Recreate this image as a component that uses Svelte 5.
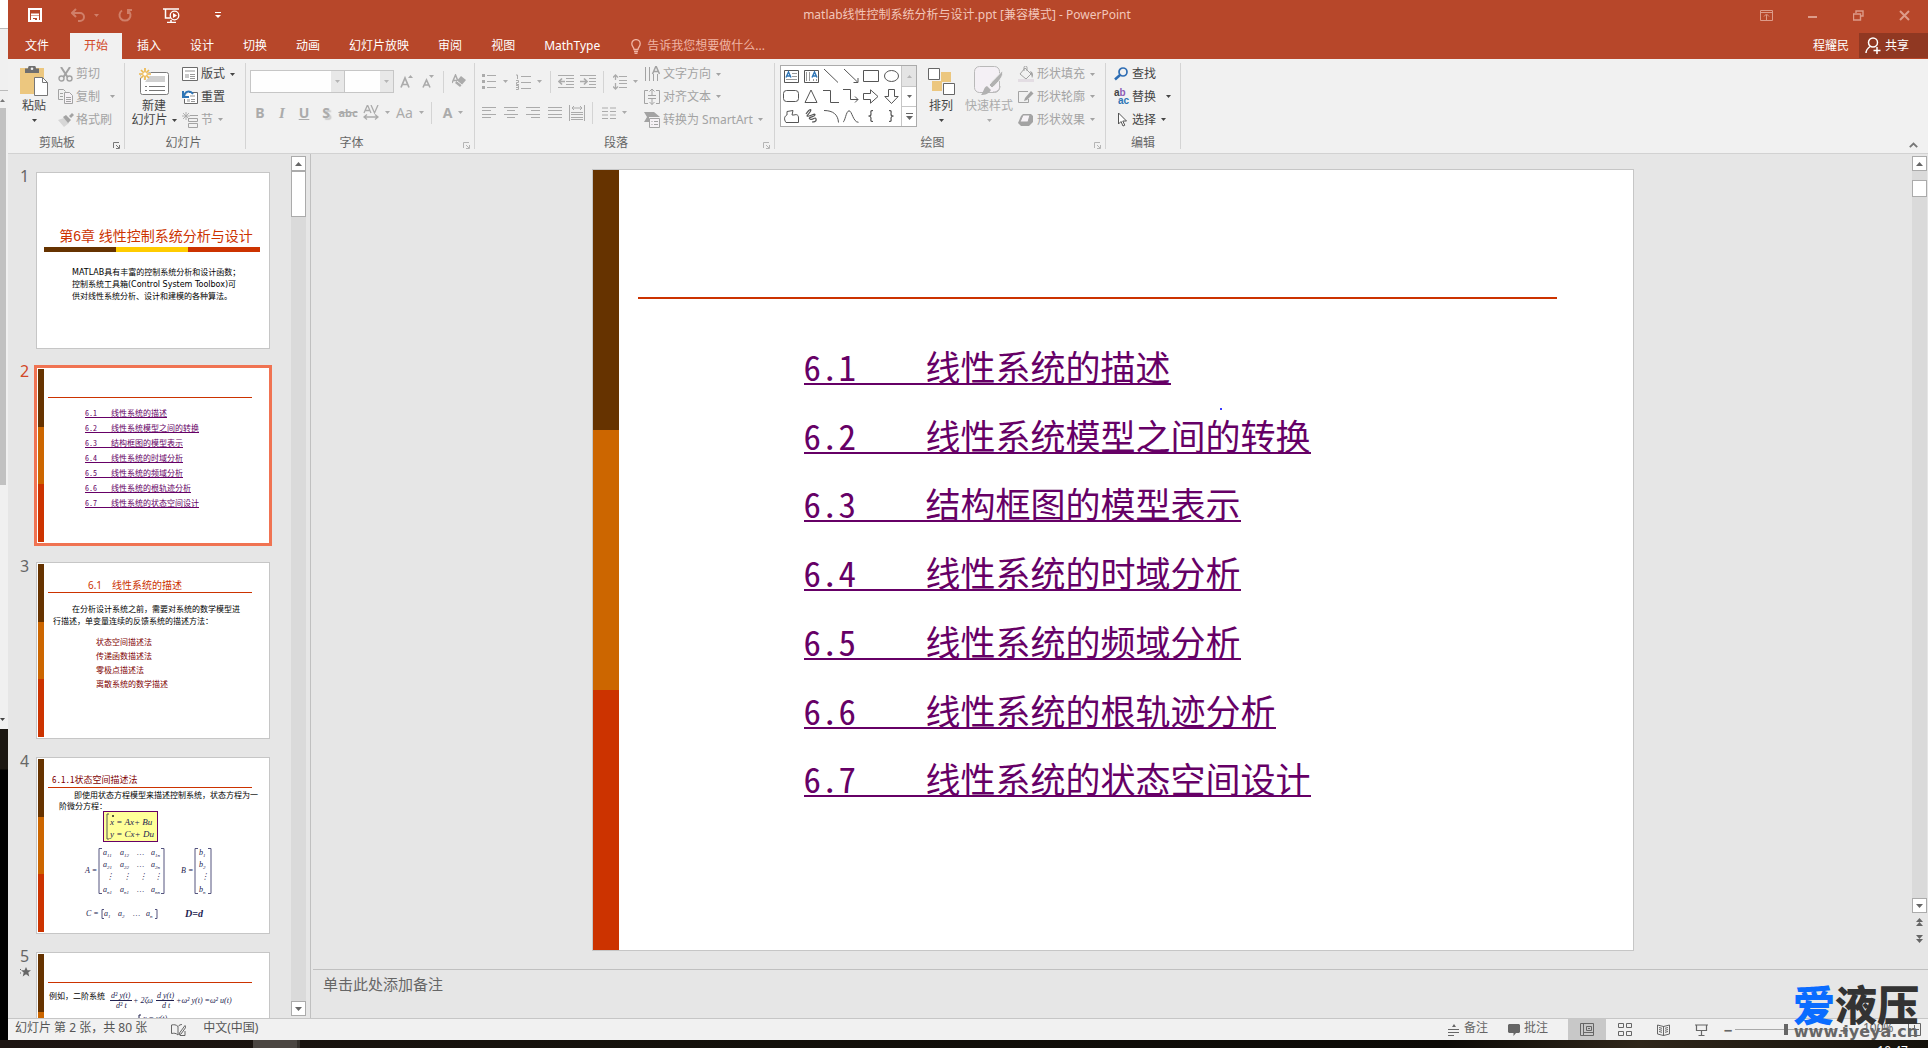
<script>
  const icons = {
    save: [14, 14, '<path d="M1 1h12v12H1z" fill="none" stroke="currentColor" stroke-width="2"/><path d="M3 6.500h8M4 13V9h6v4" fill="none" stroke="currentColor" stroke-width="2"/><path d="M5 11h2v3H5z" fill="currentColor"/>'],
    undo: [15, 14, '<path d="M5 1L1 5l4 4M1 5h8a4 4 0 0 1 0 8H7" fill="none" stroke="currentColor" stroke-width="2"/>'],
    redo: [14, 14, '<path d="M4 2.500a5.500 5.500 0 1 0 6 0M10 6V2h4" fill="none" stroke="currentColor" stroke-width="2"/>'],
    present: [17, 15, '<path d="M0 1h16M2.500 1v9h5M4 14.500h9M8 12v2" fill="none" stroke="currentColor" stroke-width="1.500"/><circle cx="11.500" cy="7.500" r="4.300" fill="#b7472a" stroke="currentColor" stroke-width="1.300"/><path d="M10 5v5l4-2.500z" fill="currentColor"/>'],
    customize: [6, 7, '<path d="M0 .5h6" stroke="currentColor"/><path d="M0 3h6L3 6z" fill="currentColor"/>'],
    ribbonOpts: [13, 11, '<path d="M.5.500h12v10H.5zM.5 2.500h12M6.500 10V5M4 6.500l2.500-2.500L9 6.500" fill="none" stroke="currentColor"/>'],
    minimize: [10, 11, '<path d="M0 7h9" stroke="currentColor" stroke-width="2"/>'],
    restore: [11, 11, '<path d="M.5 4h7v6h-7zM3 3V1h7v5H8" fill="none" stroke="currentColor" stroke-width="1.400"/>'],
    close: [11, 11, '<path d="M1 1l9 9M10 1l-9 9" stroke="currentColor" stroke-width="2"/>'],
    bulb: [10, 15, '<path d="M3 10.500C3 8 .8 7.500.8 4.800a4.200 4.200 0 0 1 8.400 0C9.200 7.500 7 8 7 10.500zM3 12.500h4M3.500 14.300h3" fill="none" stroke="currentColor" stroke-width="1.300"/>'],
    share: [16, 17, '<circle cx="8" cy="5.500" r="4.500" fill="none" stroke="currentColor" stroke-width="1.500"/><path d="M1 16c0-3 2-5 4-6.500M12 10v7M8.500 13.500h7" fill="none" stroke="currentColor" stroke-width="1.500"/>'],
    caret: [5, 3, '<path d="M0 0h5L2.500 3z" fill="currentColor"/>'],
    paste: [28, 30, '<path d="M0 2h24v26H0z" fill="#ecc77f"/><path d="M5 2.500h3a4 3.500 0 0 1 8 0h3V7H5z" fill="#6f6f6f"/><circle cx="12" cy="2.800" r="1.300" fill="#f1f1f1"/><path d="M14.500 11.500h8l5 5v13h-13z" fill="#fff" stroke="#777"/><path d="M22.500 11.500v5h5" fill="none" stroke="#777"/>'],
    cut: [15, 15, '<path d="M3 0l6.500 10M12 0L5.500 10" stroke="currentColor" stroke-width="2" fill="none"/><circle cx="3.500" cy="11.500" r="2.500" fill="none" stroke="currentColor" stroke-width="1.400"/><circle cx="11.500" cy="11.500" r="2.500" fill="none" stroke="currentColor" stroke-width="1.400"/>'],
    copy: [15, 15, '<path d="M5 10.500H.5V.5h5l2 2M2 4.500h3M2 7.500h3" fill="none" stroke="currentColor"/><path d="M6.500 3.500h5l3 3v8h-8z" fill="#f6f2f6" stroke="currentColor"/><path d="M8 8.500h5M8 10.500h5M8 12.500h5" stroke="currentColor"/>'],
    brush: [16, 14, '<path d="M0 7l6-2 5 5-5 4C4 12 2 9 0 7z" fill="#d6d6d6"/><path d="M5 4l3-2 5 5-3 3zM11 3l3-3 2 2-3 3z" fill="currentColor"/>'],
    newSlide: [30, 27, '<path d="M3.500 4.500h24a2 2 0 0 1 2 2v18a2 2 0 0 1-2 2h-24a2 2 0 0 1-2-2v-18a2 2 0 0 1 2-2z" fill="#fff" stroke="#7b7b7b"/><path d="M10 8h16v6H6z" fill="#d0d0d0"/><path d="M6 18.500h2m2 0h16M6 22.500h2m2 0h16" stroke="#777"/><path d="M5.500 0v12M0 6h12M1.500 2l8 8M9.500 2l-8 8" stroke="#f1f1f1" stroke-width="3"/><path d="M6 0v12M0 6h12M2 2l8 8M10 2l-8 8" stroke="#edb84f" stroke-width="1.700"/><circle cx="6" cy="6" r="1.800" fill="#fff"/>'],
    layout: [16, 14, '<path d="M.5.500h15v13H.5z" fill="#fff" stroke="#6b6b6b"/><path d="M3 3h10v2H3zM3 7h4v4H3z" fill="#c9c9c9"/><path d="M8 7.500h5M8 9.500h5M8 11.500h5" stroke="#999"/>'],
    reset: [16, 14, '<path d="M7 2.500h8.500v11H2.500V9" fill="#fff" stroke="#6b6b6b"/><path d="M8 5h5v2H8zM5 9h3v3H5z" fill="#c9c9c9"/><path d="M9 9.500h4M9 11.500h4" stroke="#999"/><path d="M2 6c1-5 6-6 9-2M1 1v6h6" fill="none" stroke="#2e75b6" stroke-width="2"/>'],
    section: [16, 16, '<path d="M4 0v8M0 4h8M1 1l6 6M7 1L1 7" stroke="currentColor" stroke-width=".8"/><path d="M8 3.500h8M6.500 6.500h9v3h-9zM6.500 11.500h9v4h-9z" fill="none" stroke="currentColor"/>'],
    growA: [13, 13, '<path d="M1 12.500L5 3l4 9.500M2.500 9.500h5" fill="none" stroke="currentColor" stroke-width="1.700"/><path d="M8 3h5l-2.500-3z" fill="currentColor"/>'],
    shrinkA: [12, 13, '<path d="M1 12.500L4.500 5 8 12.500M2 10h5" fill="none" stroke="currentColor" stroke-width="1.600"/><path d="M7 0h5L9.500 3z" fill="currentColor"/>'],
    eraser: [15, 15, '<path d="M0 9L3.500 1 6 7M1.500 6.500h4" fill="none" stroke="currentColor" stroke-width="1.500"/><path d="M9 2l5 4-6 7-5-4z" fill="currentColor"/><path d="M5 7l5 4" stroke="#f1f1f1"/>'],
    spacing: [16, 15, '<path d="M1 8L4.500 0 8 8M2.500 5.500h4M8 0l3.500 8L15 0M1 12h14M4 9.500L1 12l3 2.500M12 9.500l3 2.500-3 2.500" fill="none" stroke="currentColor" stroke-width="1.300"/>'],
    bullets: [15, 15, '<path d="M5 1.500h9M5 7.500h9M5 13.500h9" stroke="currentColor"/><path d="M0 0h3v3H0zM0 6h3v3H0zM0 12h3v3H0z" fill="currentColor"/>'],
    numbers: [15, 16, '<path d="M5 2.500h10M5 8.500h10M5 14.500h10" stroke="currentColor"/><path d="M0 1h1.500v4M0 6.500h2.500v2H.5v2H3M0 11.500h2.500v4H0M0 13.500h2.500" fill="none" stroke="currentColor"/>'],
    outdent: [16, 13, '<path d="M0 .5h16M8 3.500h8M8 6.500h8M8 9.500h8M0 12.500h16" stroke="currentColor"/><path d="M7 6.500H1M4 3.500l-3 3 3 3" fill="none" stroke="currentColor" stroke-width="1.700"/>'],
    indent: [16, 13, '<path d="M0 .5h16M9 3.500h7M9 6.500h7M9 9.500h7M0 12.500h16" stroke="currentColor"/><path d="M0 6.500h6M4 3.500l3 3-3 3" fill="none" stroke="currentColor" stroke-width="1.700"/>'],
    lineGap: [14, 16, '<path d="M6 2.500h8M6 6.500h8M6 9.500h8M6 13.500h8" stroke="currentColor"/><path d="M2.500 1v5M0 3.500L2.500 1 5 3.500M2.500 9v6M0 12.500L2.500 15 5 12.500" fill="none" stroke="currentColor" stroke-width="1.300"/>'],
    left: [14, 11, '<path d="M0 .5h14M0 3.500h9M0 7.500h14M0 10.500h9" stroke="currentColor"/>'],
    center: [14, 11, '<path d="M0 .5h14M3 3.500h8M0 7.500h14M3 10.500h8" stroke="currentColor"/>'],
    right: [14, 11, '<path d="M0 .5h14M5 3.500h9M0 7.500h14M5 10.500h9" stroke="currentColor"/>'],
    justify: [14, 11, '<path d="M0 .5h14M0 3.500h14M0 7.500h14M0 10.500h14" stroke="currentColor"/>'],
    distribute: [16, 16, '<path d="M.5 0v16M15.500 0v16M2 7.500h12M2 9.500h12M2 12.500h12M2 14.500h12M3 3h10M5 1L3 3l2 2M11 1l2 2-2 2" fill="none" stroke="currentColor"/>'],
    columns: [14, 12, '<path d="M0 1h6M0 4.500h6M0 8h6M0 11.500h6M8 1h6M8 4.500h6M8 8h6M8 11.500h6" stroke="currentColor" stroke-width="1.200"/>'],
    textDir: [16, 16, '<path d="M1.500 1v14M5.500 1v14M9.500 8v7M13.500 8v7" stroke="currentColor"/><path d="M8.500 8L12 0l3.500 8M10 5.500h4" fill="none" stroke="currentColor" stroke-width="1.500"/>'],
    alignText: [16, 16, '<path d="M4 1.500H.5v13H4M12 1.500h3.500v13H12" fill="none" stroke="currentColor"/><path d="M4 6.500h8M4 9.500h8M8 0v6M5.500 2.500L8 0l2.500 2.500M8 10v5.500M5.500 13L8 15.500 10.500 13" fill="none" stroke="currentColor"/>'],
    smart: [16, 16, '<path d="M0 0h10l6 5H5v5H0l3-5z" fill="currentColor"/><path d="M5.500 6.500h10v9h-10z" fill="#f6f2f6" stroke="currentColor"/><path d="M7.500 9.500h1m1.500 0h4M7.500 12.500h1m1.500 0h4" stroke="currentColor"/>'],
    sTextH: [15, 13, '<path d="M.5.500h14v12H.5z" fill="#fff" stroke="#555"/><path d="M2 7.500L4.500 2 7 7.500M3 6h3" fill="none" stroke="#2e75b6" stroke-width="1.400"/><path d="M8 3.500h5M8 6.500h5M2 9.500h11" stroke="#999"/>'],
    sTextV: [15, 13, '<path d="M.5.500h14v12H.5z" fill="#fff" stroke="#555"/><path d="M8 7.500L10.500 2 13 7.500M9 6h3" fill="none" stroke="#2e75b6" stroke-width="1.400"/><path d="M2.500 2v9M5.500 2v9M9.500 9v2M12.500 9v2" stroke="#999"/>'],
    sLine: [14, 14, '<path d="M0 0l14 13.500" stroke="#555"/>'],
    sArrow: [15, 14, '<path d="M0 0l13.500 13M14 9v4.500H9.500" fill="none" stroke="#555"/>'],
    sRect: [16, 12, '<path d="M.5.500h15v11H.5z" fill="none" stroke="#555"/>'],
    sOval: [15, 12, '<ellipse cx="7.500" cy="6" rx="7" ry="5.500" fill="none" stroke="#555"/>'],
    sRound: [16, 12, '<rect x=".5" y=".5" width="15" height="11" rx="3" fill="none" stroke="#555"/>'],
    sTri: [14, 14, '<path d="M7 1l6 12.500H1z" fill="none" stroke="#555"/>'],
    sElbow: [16, 13, '<path d="M0 .5h7.500v12H16" fill="none" stroke="#555"/>'],
    sElbowA: [16, 14, '<path d="M0 .5h7.500v10H15M12 7.500l3 3-3 3" fill="none" stroke="#555"/>'],
    sRight: [16, 15, '<path d="M.5 4.500h7V.8L15 7.500l-7.500 6.700v-3.700h-7z" fill="none" stroke="#555"/>'],
    sDown: [15, 15, '<path d="M4.500.500h6v7h3.700l-6.700 7L.8 7.500h3.700z" fill="none" stroke="#555"/>'],
    sFree: [15, 13, '<path d="M3 1.500L9 .5 8 5h2c3-1 4.500 0 4.500 3v4.500H2C-.5 9 .5 6 3 5z" fill="none" stroke="#555"/>'],
    sScrib: [12, 14, '<path d="M1 5c4-6 6-5 4-2s-5 5-1 4 6-3 6-1-8 2-5 4 5-3 6 0-3 3-4 3" fill="none" stroke="#555" stroke-width="1.200"/>'],
    sArc: [15, 13, '<path d="M0 .5c9 0 14 4 14.500 12" fill="none" stroke="#555"/>'],
    sCurve: [16, 13, '<path d="M0 12C2 12 3 1 6 .8s4 11.500 9.500 11.500" fill="none" stroke="#555"/>'],
    sBraceL: [6, 12, '<path d="M5 .5C2 .5 3 2 3 4S2 6 1 6s2 0 2 2-1 3.500 2 3.500" fill="none" stroke="#555" stroke-width="1.200"/>'],
    sBraceR: [6, 12, '<path d="M1 .5C4 .5 3 2 3 4s1 2 2 2-2 0-2 2 1 3.500-2 3.500" fill="none" stroke="#555" stroke-width="1.200"/>'],
    up: [5, 3, '<path d="M0 3h5L2.500 0z" fill="currentColor"/>'],
    more: [7, 7, '<path d="M0 .5h7" stroke="currentColor"/><path d="M0 3h7L3.500 7z" fill="currentColor"/>'],
    arrange: [27, 27, '<path d="M13 4h10v10H13zM4 13h10v10H4z" fill="#ecc77f"/><path d="M.5.500h11v11H.5zM15.500 15.500h11v11h-11z" fill="#fff" stroke="#666"/>'],
    quick: [30, 30, '<rect x=".5" y=".5" width="25" height="26" rx="5" fill="#f4f0f5" stroke="#b9b9b9"/><path d="M28 5c3 4-4 12-10 17l-3-3C19 14 25 9 28 5z" fill="#b1b1b1" stroke="#f1f1f1"/><path d="M13 20l4 4c-2 4-6 5-10 5 3-3 2-7 6-9z" fill="#b1b1b1"/><path d="M19 26c4 0 7-2 7-6" stroke="#b9b9b9" fill="none"/>'],
    fill: [16, 16, '<path d="M7 2l6 6-5 5-6-5zM6 5V1.500a1.500 1.500 0 0 1 3 0V5" fill="none" stroke="currentColor"/><path d="M12 5c3 1 4 4 2 7l-1-4z" fill="currentColor"/><path d="M0 13h16v3H0z" fill="#e3dde3"/>'],
    outline: [16, 14, '<path d="M10 1.500H.5v11h10V9" fill="none" stroke="currentColor"/><path d="M13 1l2.500 2.500L9 10l-3 1 1-3z" fill="currentColor"/>'],
    effect: [16, 14, '<path d="M5 1h8l2 2v6l-4 4H3L0 10l3-7z" fill="currentColor"/><path d="M5 2h7l-2 7H2z" fill="#f6f2f6" stroke="currentColor"/>'],
    find: [15, 14, '<circle cx="9" cy="5" r="4" fill="none" stroke="#2e6db4" stroke-width="1.700"/><path d="M6 8l-5 4.500" stroke="#2e6db4" stroke-width="2.500"/>'],
    select: [15, 15, '<path d="M4.500 1v11l2.500-2.500 2 4.500 1.800-.8-2-4.200h3.700z" fill="#fff" stroke="#555"/>'],
    launcher: [7, 7, '<path d="M.5 6V.5H6M3 3l3 3M6.500 3v3.500H3" fill="none" stroke="currentColor"/>'],
    chevron: [9, 6, '<path d="M.8 5.200L4.500 1.500 8.200 5.200" fill="none" stroke="currentColor" stroke-width="1.800"/>'],
    scrollUp: [7, 4, '<path d="M0 4h7L3.500 0z" fill="currentColor"/>'],
    scrollDown: [7, 4, '<path d="M0 0h7L3.500 4z" fill="currentColor"/>'],
    pageUp: [7, 8, '<path d="M0 4h7L3.500 0zM0 8h7L3.500 4z" fill="currentColor"/>'],
    pageDown: [7, 8, '<path d="M0 0h7L3.500 4zM0 4h7L3.500 8z" fill="currentColor"/>'],
    star: [11, 10, '<path d="M6 0l1.500 3.200H11L8.300 5.600 9.300 9.500 6 7.300 2.700 9.500l1-3.900L1 3.200h3.500z" fill="currentColor"/><path d="M0 2.500h1M0 6h1" stroke="currentColor"/>'],
    spell: [15, 12, '<path d="M7 11C5 9 3 9 .5 9.500V1C3 .5 5 .5 7 2.500zM7 2.500C8 1 10 .5 11 .5" fill="none" stroke="currentColor"/><path d="M14 1.500L8.500 9 8 11l2-1L15 3zM9 11.500h5V7" fill="none" stroke="currentColor"/>'],
    notes: [12, 12, '<path d="M4 3h4L6 0z" fill="currentColor"/><path d="M0 5.500h11M0 8.500h11M0 11.500h6" stroke="currentColor"/>'],
    comment: [12, 12, '<path d="M1 0h10l1 1v7l-1 1H8l-2.500 3V9H1L0 8V1z" fill="currentColor"/>'],
    normal: [14, 13, '<path d="M.5.500h13v12H.5zM3.500 1v11M6.500 3.500h5v4h-5zM4 9.500h9M8 5.500h2" fill="none" stroke="currentColor"/>'],
    sorter: [14, 13, '<path d="M.5.500h5v4h-5zM8.500.500h5v4h-5zM.5 8.500h5v4h-5zM8.500 8.500h5v4h-5z" fill="none" stroke="currentColor"/>'],
    reading: [13, 12, '<path d="M.5 1l6 1.500 6-1.500v9l-6 1.500-6-1.500zM6.500 2v10M2 3.500l3 .8M2 5.500l3 .8M2 7.500l3 .8M11 3.500l-3 .8M11 5.500l-3 .8M11 7.500l-3 .8" fill="none" stroke="currentColor"/>'],
    show: [13, 12, '<path d="M0 1h13M1.500 1v5.500h10V1M6.500 7v4M3.500 11.500h6" fill="none" stroke="currentColor" stroke-width="1.200"/>'],
    fit: [13, 13, '<path d="M.5.500h12v12H.5zM6.500 2v3M6.500 8v3M2 6.500h3M8 6.500h3" fill="none" stroke="currentColor"/>']
  };

  const tabs = ['文件', '开始', '插入', '设计', '切换', '动画', '幻灯片放映', '审阅', '视图', 'MathType'];
  const shapes = [
    ['sTextH', '横排文本框'], ['sTextV', '竖排文本框'], ['sLine', '直线'], ['sArrow', '箭头'], ['sRect', '矩形'], ['sOval', '椭圆'],
    ['sRound', '圆角矩形'], ['sTri', '三角形'], ['sElbow', '肘形连接符'], ['sElbowA', '肘形箭头'], ['sRight', '右箭头'], ['sDown', '下箭头'],
    ['sFree', '任意多边形'], ['sScrib', '自由曲线'], ['sArc', '弧形'], ['sCurve', '曲线'], ['sBraceL', '左大括号'], ['sBraceR', '右大括号']
  ];
  const chapters = [
    ['6.1', '线性系统的描述'],
    ['6.2', '线性系统模型之间的转换'],
    ['6.3', '结构框图的模型表示'],
    ['6.4', '线性系统的时域分析'],
    ['6.5', '线性系统的频域分析'],
    ['6.6', '线性系统的根轨迹分析'],
    ['6.7', '线性系统的状态空间设计']
  ];
  const matrixRows = [
    [44, '11', '12', '1n'],
    [56, '21', '22', '2n'],
    [81, 'n1', 'n1', 'nn']
  ];
  const views = [['normal', '普通视图'], ['sorter', '幻灯片浏览'], ['reading', '阅读视图'], ['show', '幻灯片放映']];
  let zoom = $state(50);
</script>

{#snippet icon(name)}
  <svg width={icons[name][0]} height={icons[name][1]} viewBox="0 0 {icons[name][0]} {icons[name][1]}" aria-hidden="true">{@html icons[name][2]}</svg>
{/snippet}

{#snippet cmd(name, text, off, drop)}
  <button class="cmd" class:off>
    <span class="cmd-icon">{@render icon(name)}</span>
    <span>{text}</span>
    {#if drop}<span class="drop">{@render icon('caret')}</span>{/if}
  </button>
{/snippet}

{#snippet tool(name, label, drop)}
  <button class="tool off" class:wide={drop} aria-label={label}>
    {@render icon(name)}
    {#if drop}{@render icon('caret')}{/if}
  </button>
{/snippet}

{#snippet caption(text, off, launcher)}
  <div class="caption">
    <span>{text}</span>
    {#if launcher}<button class="launcher" class:off aria-label="{text}设置">{@render icon('launcher')}</button>{/if}
  </div>
{/snippet}

{#snippet stripe()}
  <div class="stripe"><i></i><i></i><i></i></div>
{/snippet}

<div class="screen">
  <div class="behind">
    <div class="b-top"></div>
    <div class="b-pane"></div>
    <div class="b-mid">{@render icon('up')}</div>
    <div class="b-bar"></div>
    <div class="b-low">{@render icon('caret')}</div>
    <div class="b-dark"></div>
  </div>

  <div class="app">
    <header>
      <div class="titlebar">
        <div class="quick">
          <button class="q-save" aria-label="保存">{@render icon('save')}</button>
          <button class="q-undo dim" aria-label="撤消">{@render icon('undo')}{@render icon('caret')}</button>
          <button class="q-redo dim" aria-label="重复">{@render icon('redo')}</button>
          <button class="q-show" aria-label="从头开始放映">{@render icon('present')}</button>
          <button aria-label="自定义快速访问工具栏">{@render icon('customize')}</button>
        </div>
        <div class="title">matlab线性控制系统分析与设计.ppt [兼容模式] - PowerPoint</div>
        <div class="window">
          <button aria-label="功能区显示选项">{@render icon('ribbonOpts')}</button>
          <button aria-label="最小化">{@render icon('minimize')}</button>
          <button aria-label="还原">{@render icon('restore')}</button>
          <button aria-label="关闭">{@render icon('close')}</button>
        </div>
      </div>
      <nav class="tabs">
        {#each tabs as tab, i}
          <button class="tab" class:file={i === 0} class:active={i === 1}>{tab}</button>
        {/each}
        <button class="tell">{@render icon('bulb')}<span>告诉我您想要做什么...</span></button>
        <span class="user">程耀民</span>
        <button class="share">{@render icon('share')}<span>共享</span></button>
      </nav>
    </header>

    <section class="ribbon">
      <div class="group clip">
        <div class="body">
          <button class="big w48"><span class="big-icon">{@render icon('paste')}</span><span>粘贴</span><span>{@render icon('caret')}</span></button>
          <div class="stack">
            {@render cmd('cut', '剪切', true, false)}
            {@render cmd('copy', '复制', true, true)}
            {@render cmd('brush', '格式刷', true, false)}
          </div>
        </div>
        {@render caption('剪贴板', false, true)}
      </div>

      <div class="group slides">
        <div class="body">
          <button class="big w48"><span class="big-icon">{@render icon('newSlide')}</span><span>新建</span><span class="line">幻灯片{@render icon('caret')}</span></button>
          <div class="stack">
            {@render cmd('layout', '版式', false, true)}
            {@render cmd('reset', '重置', false, false)}
            {@render cmd('section', '节', true, true)}
          </div>
        </div>
        {@render caption('幻灯片', false, false)}
      </div>

      <div class="group font">
        <div class="rows">
          <div class="row">
            <label class="combo c-face"><select aria-label="字体" disabled><option></option></select><span>{@render icon('caret')}</span></label>
            <label class="combo c-size"><select aria-label="字号" disabled><option></option></select><span>{@render icon('caret')}</span></label>
            {@render tool('growA', '增大字号', false)}
            {@render tool('shrinkA', '减小字号', false)}
            <i class="sep"></i>
            {@render tool('eraser', '清除格式', false)}
          </div>
          <div class="row">
            <button class="tool off"><b>B</b></button>
            <button class="tool off"><em>I</em></button>
            <button class="tool off"><u>U</u></button>
            <button class="tool off"><b class="shadow">S</b></button>
            <button class="tool off"><s>abc</s></button>
            {@render tool('spacing', '字符间距', true)}
            <button class="tool wide off"><span class="aa">Aa</span>{@render icon('caret')}</button>
            <i class="sep"></i>
            <button class="tool wide off"><b class="aa">A</b>{@render icon('caret')}</button>
          </div>
        </div>
        {@render caption('字体', true, true)}
      </div>

      <div class="group para">
        <div class="body">
          <div class="rows">
            <div class="row">
              {@render tool('bullets', '项目符号', true)}
              {@render tool('numbers', '编号', true)}
              <i class="sep"></i>
              {@render tool('outdent', '降低列表级别', false)}
              {@render tool('indent', '提高列表级别', false)}
              <i class="sep"></i>
              {@render tool('lineGap', '行距', true)}
            </div>
            <div class="row">
              {@render tool('left', '左对齐', false)}
              {@render tool('center', '居中', false)}
              {@render tool('right', '右对齐', false)}
              {@render tool('justify', '两端对齐', false)}
              {@render tool('distribute', '分散对齐', false)}
              <i class="sep"></i>
              {@render tool('columns', '分栏', true)}
            </div>
          </div>
          <div class="stack">
            {@render cmd('textDir', '文字方向', true, true)}
            {@render cmd('alignText', '对齐文本', true, true)}
            {@render cmd('smart', '转换为 SmartArt', true, true)}
          </div>
        </div>
        {@render caption('段落', true, true)}
      </div>

      <div class="group draw">
        <div class="body">
          <div class="gallery">
            <div class="shapes">
              {#each shapes as [name, label]}
                <button aria-label={label}>{@render icon(name)}</button>
              {/each}
            </div>
            <div class="spin">
              <button class="off" aria-label="上一行">{@render icon('up')}</button>
              <button aria-label="下一行">{@render icon('caret')}</button>
              <button aria-label="其他形状">{@render icon('more')}</button>
            </div>
          </div>
          <button class="big w48"><span class="big-icon">{@render icon('arrange')}</span><span>排列</span><span>{@render icon('caret')}</span></button>
          <button class="big w48 off"><span class="big-icon">{@render icon('quick')}</span><span>快速样式</span><span>{@render icon('caret')}</span></button>
          <div class="stack">
            {@render cmd('fill', '形状填充', true, true)}
            {@render cmd('outline', '形状轮廓', true, true)}
            {@render cmd('effect', '形状效果', true, true)}
          </div>
        </div>
        {@render caption('绘图', true, true)}
      </div>

      <div class="group edit">
        <div class="body">
          <div class="stack">
            {@render cmd('find', '查找', false, false)}
            <button class="cmd">
              <span class="cmd-icon swap"><span>a<em>b</em></span><span class="to">ac</span></span>
              <span>替换</span><span class="drop far">{@render icon('caret')}</span>
            </button>
            {@render cmd('select', '选择', false, true)}
          </div>
        </div>
        {@render caption('编辑', false, false)}
      </div>
      <button class="collapse" aria-label="折叠功能区">{@render icon('chevron')}</button>
    </section>

    <main>
      <aside class="panel">
        <ol class="thumbs">
          <li>
            <span class="num">1</span>
            <div class="thumb cover">
              <h3>第6章 线性控制系统分析与设计</h3>
              <div class="tri"><i></i><i></i><i></i></div>
              <p>MATLAB具有丰富的控制系统分析和设计函数；<br />控制系统工具箱(Control System Toolbox)可<br />供对线性系统分析、设计和建模的各种算法。</p>
            </div>
          </li>
          <li class="current">
            <span class="num">2</span>
            <div class="thumb">
              {@render stripe()}
              <div class="page">
                <div class="head"></div>
                <ul class="mini">
                  {#each chapters as [no, name]}
                    <li><span><b>{no}</b>{name}</span></li>
                  {/each}
                </ul>
              </div>
            </div>
          </li>
          <li>
            <span class="num">3</span>
            <div class="thumb">
              {@render stripe()}
              <div class="page">
                <div class="head mid">6.1　线性系统的描述</div>
                <p class="intro">在分析设计系统之前，需要对系统的数学模型进<br />行描述，单变量连续的反馈系统的描述方法：</p>
                <ul class="methods">
                  <li>状态空间描述法</li>
                  <li>传递函数描述法</li>
                  <li>零极点描述法</li>
                  <li>离散系统的数学描述</li>
                </ul>
              </div>
            </div>
          </li>
          <li>
            <span class="num">4</span>
            <div class="thumb">
              {@render stripe()}
              <div class="page">
                <div class="head sub">6.1.1状态空间描述法</div>
                <p class="state">即使用状态方程模型来描述控制系统，状态方程为一<br />阶微分方程：</p>
                <svg class="math" width="200" height="116" viewBox="0 0 200 116">
                  <rect x="59.500" y=".5" width="54" height="30" fill="#ffff99" stroke="#660066" />
                  <path d="M65 3h-2v25h2" fill="none" stroke="#555" />
                  <circle cx="69" cy="5" r="1" fill="#222" />
                  <g font-size="9"><text x="66" y="14">x = Ax+ Bu</text><text x="66" y="26">y = Cx+ Du</text></g>
                  <g font-size="8">
                    <text x="41" y="62">A =</text>
                    <text x="137" y="62">B =</text>
                    <text x="42" y="105">C =</text>
                    {#each matrixRows as [y, a, b, c]}
                      <text x="59" {y}>a<tspan font-size="5" dy="2">{a}</tspan></text>
                      <text x="76" {y}>a<tspan font-size="5" dy="2">{b}</tspan></text>
                      <text x="93" {y}>…</text>
                      <text x="107" {y}>a<tspan font-size="5" dy="2">{c}</tspan></text>
                    {/each}
                    <g><text x="62" y="68">⋮</text><text x="79" y="68">⋮</text><text x="95" y="68">⋮</text><text x="110" y="68">⋮</text><text x="157" y="68">⋮</text></g>
                    <text x="155" y="44">b<tspan font-size="5" dy="2">1</tspan></text>
                    <text x="155" y="56">b<tspan font-size="5" dy="2">2</tspan></text>
                    <text x="155" y="81">b<tspan font-size="5" dy="2">n</tspan></text>
                    <text x="60" y="105">a<tspan font-size="5" dy="2">1</tspan></text>
                    <text x="74" y="105">a<tspan font-size="5" dy="2">2</tspan></text>
                    <text x="89" y="105">…</text>
                    <text x="102" y="105">a<tspan font-size="5" dy="2">n</tspan></text>
                  </g>
                  <text x="141" y="106" font-size="10" font-weight="bold">D=d</text>
                  <path d="M58 37.500h-3v45h3M117 37.500h3v45h-3M154 37.500h-3v45h3M164 37.500h3v45h-3M60 98.500h-2v9h2M111 98.500h2v9h-2" fill="none" stroke="#55557f" />
                </svg>
              </div>
            </div>
          </li>
          <li>
            <span class="num">5{@render icon('star')}</span>
            <div class="thumb">
              {@render stripe()}
              <div class="page">
                <div class="head"></div>
                <div class="example">
                  <span>例如，二阶系统</span>
                  <svg class="math" width="134" height="40" viewBox="0 0 134 40">
                    <g font-size="8">
                      <text x="2" y="10">d² y(t)</text><text x="7" y="20">d² t</text>
                      <text x="24" y="15">+ 2ζω</text>
                      <text x="48" y="10">d y(t)</text><text x="53" y="20">d t</text>
                      <text x="67" y="15">+ω² y(t) =ω² u(t)</text>
                      <text x="34" y="33">x = y(t)</text>
                    </g>
                    <path d="M1 12.500h22M47 12.500h18M32 27h-2v12" fill="none" stroke="#22224f" />
                  </svg>
                </div>
              </div>
            </div>
          </li>
        </ol>
        <div class="scroll">
          <button aria-label="向上滚动">{@render icon('scrollUp')}</button>
          <div class="knob long"></div>
          <button class="end" aria-label="向下滚动">{@render icon('scrollDown')}</button>
        </div>
      </aside>

      <section class="work">
        <div class="stage">
          <div class="canvas">
            <article class="slide">
              {@render stripe()}
              <div class="content">
                <div class="rule"></div>
                <ul>
                  {#each chapters as [no, name]}
                    <li><a href="#s{no}"><span class="no">{no}</span><span>{name}</span></a></li>
                  {/each}
                </ul>
              </div>
              <i class="dot"></i>
            </article>
          </div>
          <div class="scroll main-scroll">
            <button aria-label="上一屏">{@render icon('scrollUp')}</button>
            <div class="knob short"></div>
            <button class="end" aria-label="下一屏">{@render icon('scrollDown')}</button>
            <div class="pager">
              <button aria-label="上一张幻灯片">{@render icon('pageUp')}</button>
              <button aria-label="下一张幻灯片">{@render icon('pageDown')}</button>
            </div>
          </div>
        </div>
        <div class="memo">单击此处添加备注</div>
      </section>
    </main>

    <footer>
      <span>幻灯片 第 2 张，共 80 张</span>
      <button class="spell" aria-label="拼写检查">{@render icon('spell')}</button>
      <span>中文(中国)</span>
      <div class="tools">
        <button class="note">{@render icon('notes')}<span>备注</span></button>
        <button class="note">{@render icon('comment')}<span>批注</span></button>
        <div class="views">
          {#each views as [name, label], i}
            <button class:on={i === 0} aria-label={label}>{@render icon(name)}</button>
          {/each}
        </div>
        <button class="sign" aria-label="缩小">−</button>
        <input type="range" min="0" max="100" bind:value={zoom} aria-label="显示比例" />
        <button class="sign" aria-label="放大">+</button>
        <span class="pct">100%</span>
        <button aria-label="适应窗口">{@render icon('fit')}</button>
      </div>
    </footer>
  </div>

  <div class="taskbar"><i></i><span>10:47</span></div>
  <div class="mark"><div class="m-name"><b>爱</b>液压</div><div class="m-url">www.iyeya.cn</div></div>
</div>

<style>
  :global(body) { margin: 0; overflow: hidden; }
  .screen {
    position: relative;
    display: grid;
    grid-template: minmax(0, 1fr) 8px / 8px minmax(0, 1fr);
    height: 100vh;
    background: #000;
    color: #444;
    font: 12px/14px "Noto Sans", "Noto Sans CJK SC", sans-serif;
    overflow: hidden;
  }
  svg { display: block; flex: none; }
  button { display: flex; align-items: center; justify-content: center; margin: 0; padding: 0; border: 0; background: none; color: inherit; font: inherit; white-space: nowrap; }
  ul, ol { list-style: none; margin: 0; padding: 0; }
  p, h3 { margin: 0; font-weight: 400; }
  i { display: block; }
  .off { color: #ababab; }

  .behind { display: flex; flex-direction: column; overflow: hidden; }
  .b-top { height: 28px; background: #fff; border-bottom: 1px solid #bbb; }
  .b-pane { height: 61px; background: #f0f0f0; border-bottom: 1px solid #bbb; }
  .b-mid { height: 9px; padding-top: 8px; background: #f0f0f0; color: #777; }
  .b-bar { height: 377px; background: #c1c1c1; border-right: 2px solid #f0f0f0; }
  .b-low { height: 11px; padding-top: 233px; background: #f0f0f0; }
  .b-dark { flex: 1; background: linear-gradient(#1b1712 40px, #000 41px); }

  .app { display: flex; flex-direction: column; min-width: 0; min-height: 0; background: #e6e6e6; }
  header { background: #b7472a; color: #fff; }
  .titlebar { display: grid; grid-template-columns: 1fr auto 1fr; align-items: start; height: 33px; }
  .quick { display: flex; align-items: center; height: 30px; padding-left: 20px; }
  .q-save { margin-right: 29px; }
  .q-undo { gap: 8px; margin-right: 19px; }
  .q-redo { margin-right: 31px; }
  .q-show { margin-right: 35px; }
  .dim { color: #d07f69; }
  .title { color: #f3c6ba; padding-right: 2px; line-height: 30px; }
  .window { display: flex; justify-content: flex-end; gap: 35px; padding-right: 18px; height: 30px; color: #dd9b89; }
  .tabs { display: flex; gap: 1px; height: 26px; }
  .tab { padding: 0 14px; }
  .file { padding: 0 20px 0 17px; }
  .active { background: #f1f1f1; color: #d24726; }
  .tell { gap: 6px; margin-left: 16px; color: #f0b5a5; }
  .user { margin-left: auto; align-self: center; padding-right: 9px; }
  .share { width: 69px; height: 25px; gap: 4px; padding-right: 13px; box-sizing: border-box; background: #903822; }

  .ribbon { display: flex; height: 94px; background: #f1f1f1; border-bottom: 1px solid #d2d2d2; }
  .group { display: flex; flex-direction: column; justify-content: space-between; box-sizing: border-box; margin: 4px 0; border-right: 1px solid #d4d4d4; flex: none; }
  .clip { width: 117px; padding-left: 2px; }
  .slides { width: 121px; padding-left: 5px; }
  .font { width: 229px; padding-left: 3px; }
  .para { width: 300px; padding-left: 3px; }
  .draw { width: 331px; padding-left: 5px; }
  .edit { width: 75px; padding-left: 8px; }
  .body { display: flex; }
  .stack { display: flex; flex-direction: column; }
  .slides .stack { padding-left: 4px; }
  .para .stack { padding-left: 2px; }
  .draw .stack { padding-left: 5px; }
  .cmd { justify-content: flex-start; gap: 3px; height: 22px; }
  .cmd:nth-child(n + 2) { height: 23px; }
  .cmd.off > span { color: #a3a3a3; }
  .cmd-icon { display: flex; justify-content: center; width: 16px; }
  .clip .cmd-icon, .edit .cmd-icon { width: 15px; }
  .drop { padding-left: 2px; }
  .clip .drop { padding-left: 7px; }
  .far { padding-left: 7px; }
  .swap { flex-direction: column; width: 15px; font: bold 10px/8px "Liberation Sans", sans-serif; text-align: left; }
  .swap em { font-style: normal; color: #8e5bb5; }
  .edit .swap { align-items: flex-start; }
  .to { padding-left: 4px; color: #2e75b6; }
  .big { flex-direction: column; justify-content: flex-start; align-self: flex-start; }
  .big > span { display: flex; align-items: center; justify-content: center; height: 14px; gap: 4px; }
  .big > .big-icon { height: 36px; }
  .w48 { width: 48px; }
  .off > span { color: #ababab; }
  .rows { display: flex; flex-direction: column; gap: 8px; padding-top: 7px; }
  .row { display: flex; align-items: center; height: 23px; }
  .tool { width: 22px; height: 22px; font-size: 14px; }
  .tool s { font-size: 11px; font-weight: 700; }
  .tool em { font-family: "Liberation Serif", serif; font-weight: 700; font-size: 15px; }
  .tool u { font-weight: 700; }
  .shadow { text-shadow: 2px 2px 1px #ccc; }
  .wide { width: 34px; gap: 6px; }
  .sep { width: 1px; height: 22px; margin: 0 4px; background: #d4d4d4; }
  .combo { display: flex; box-sizing: border-box; height: 23px; border: 1px solid #c6c6c6; background: #fff; }
  .combo select { flex: 1; min-width: 0; border: 0; background: #fdfdfd; appearance: none; }
  .combo span { display: flex; align-items: center; justify-content: center; width: 13px; background: #e8e8e8; color: #b5b5b5; }
  .c-face { width: 95px; margin-left: 1px; }
  .c-size { width: 50px; margin: 0 1px 0 -1px; }
  .caption { display: flex; align-items: center; justify-content: center; position: relative; height: 13px; padding-right: 20px; color: #666; }
  .slides .caption, .edit .caption { padding-right: 8px; }
  .launcher { position: absolute; right: 4px; bottom: 0; color: #777; }
  .launcher.off { color: #b5b5b5; }
  .gallery { display: flex; margin-top: 2px; height: 60px; border: 1px solid #ababab; background: #fff; }
  .shapes { display: grid; grid-template: repeat(3, 20px) / repeat(6, 20px); }
  .spin { display: grid; grid-template-rows: 20px 19px 19px; gap: 1px; width: 14px; border-left: 1px solid #c6c6c6; background: #c6c6c6; }
  .spin button { background: #fff; color: #666; }
  .spin button.off { background: #e4e4e4; color: #b5b5b5; }
  .collapse { margin-left: auto; align-self: flex-end; padding: 0 10px 5px 0; color: #777; }

  main { flex: 1; display: flex; min-height: 0; }
  .panel { display: flex; width: 302px; min-height: 0; border-right: 1px solid #c0c0c0; flex: none; }
  .thumbs { flex: 1; display: flex; flex-direction: column; gap: 18px; padding: 18px 0 0 12px; overflow: hidden; }
  .thumbs > li { display: flex; flex: none; }
  .num { display: flex; flex-direction: column; gap: 3px; width: 16px; font-size: 16px; line-height: 16px; margin-top: -4px; color: #666; }
  .current .num { color: #d24726; }
  .thumb { display: flex; box-sizing: border-box; width: 234px; height: 177px; padding: 1px; border: 1px solid #c6c6c6; background: #fff; color: #000; font-size: 8px; line-height: 12px; white-space: nowrap; }
  .current .thumb { border-color: #f07352; box-shadow: 0 0 0 2px #f07352; }
  .stripe { display: flex; flex-direction: column; width: 6px; flex: none; }
  .stripe i { flex: 1; background: #663300; }
  .stripe i:nth-child(2) { background: #cc6600; }
  .stripe i:nth-child(3) { background: #cc3300; }
  .cover { flex-direction: column; padding: 55px 9px 0 7px; }
  .cover h3 { color: #cc3300; font-size: 14px; line-height: 16px; text-align: center; font-family: "Liberation Sans", "Noto Sans CJK SC", sans-serif; padding-left: 8px; }
  .tri { display: flex; height: 5px; margin-top: 3px; }
  .tri i { flex: 1; background: #663300; }
  .tri i:nth-child(2) { background: #ffcc00; }
  .tri i:nth-child(3) { background: #cc3300; }
  .cover p { padding: 15px 0 0 28px; font-family: "DejaVu Sans", "Noto Sans CJK SC", sans-serif; }
  .page { flex: 1; min-width: 0; padding-left: 4px; }
  .head { box-sizing: border-box; height: 29px; margin-right: 16px; border-bottom: 1px solid #cc3300; padding-top: 15px; color: #cc3300; font-size: 10px; line-height: 12px; }
  .mid { text-align: center; padding-right: 30px; }
  .sub { padding-left: 4px; color: #800000; font-size: 9px; font-family: "Noto Sans CJK SC", sans-serif; font-feature-settings: "hwid"; }
  .mini { padding: 10px 0 0 37px; color: #660066; font-family: "Noto Sans CJK SC", sans-serif; }
  .mini li { height: 15px; line-height: 9px; }
  .mini span { display: inline-flex; border-bottom: 1px solid #660066; }
  .mini b { width: 26px; font-weight: 400; font-feature-settings: "hwid"; }
  .intro { padding: 10px 0 0 5px; text-indent: 19px; }
  .methods { padding: 8px 0 0 48px; line-height: 14px; color: #800000; }
  .state { padding: 1px 0 0 11px; text-indent: 15px; line-height: 11px; }
  .math { font-family: "Liberation Serif", serif; font-style: italic; fill: #22224f; margin-left: -4px; }
  .example { display: flex; gap: 8px; padding: 5px 0 0 1px; line-height: 16px; }

  .scroll { display: flex; flex-direction: column; width: 15px; margin: 2px 4px 2px 0; background: #dadada; flex: none; }
  .scroll button, .knob { box-sizing: border-box; height: 15px; border: 1px solid #ababab; background: #fff; color: #666; flex: none; }
  .long { height: 46px; }
  .short { height: 17px; margin-top: 9px; }
  .end { margin-top: auto; }
  .work { flex: 1; display: flex; flex-direction: column; min-width: 0; padding-left: 2px; }
  .stage { flex: 1; display: flex; min-height: 0; }
  .canvas { flex: 1; display: flex; justify-content: center; min-width: 0; padding: 15px 0 18px; }
  .slide { position: relative; display: flex; box-sizing: border-box; height: 100%; aspect-ratio: 1042 / 782; border: 1px solid #c6c6c6; background: #fff; }
  .slide .stripe { width: 26px; }
  .content { flex: 1; padding: 127px 76px 0 19px; }
  .rule { height: 2px; background: #cc3300; }
  .content ul { display: grid; grid-auto-rows: 1fr; height: 481px; padding: 49px 0 0 166px; }
  .content a { display: inline-flex; border-bottom: 2px solid #660066; color: #660066; text-decoration: none; font: 35px/35px "Noto Sans CJK SC", sans-serif; white-space: nowrap; }
  .no { width: 122px; font-feature-settings: "hwid"; }
  .dot { position: absolute; left: 60.3%; top: 30.5%; width: 2px; height: 2px; background: #3b3bff; }
  .main-scroll { margin: 2px 1px 2px 0; }
  .pager { display: flex; flex-direction: column; padding-bottom: 20px; background: #e6e6e6; }
  .scroll .pager button { border: 0; background: none; height: 17px; }
  .memo { height: 49px; box-sizing: border-box; padding: 6px 0 0 10px; border-top: 1px solid #c0c0c0; font-size: 15px; line-height: 16px; color: #666; flex: none; }

  footer { display: flex; align-items: center; height: 21px; padding-left: 7px; border-top: 1px solid #c6c6c6; background: #f1f1f1; color: #555; line-height: 12px; }
  footer span { padding-bottom: 3px; }
  .spell { margin: 0 17px 0 24px; color: #666; }
  .tools { display: flex; align-items: center; align-self: stretch; margin-left: auto; padding-right: 7px; color: #666; }
  .note { gap: 4px; margin-right: 20px; }
  .views { display: flex; align-self: stretch; margin-right: 1px; }
  .views button { width: 38px; }
  .views .on { background: #c8c8c8; }
  .sign { width: 14px; font-size: 15px; font-weight: 700; }
  input[type="range"] { width: 102px; height: 11px; margin: 0; appearance: none; background: linear-gradient(#aaa, #aaa) center / 100% 1px no-repeat; }
  input[type="range"]::-webkit-slider-thumb { appearance: none; width: 4px; height: 11px; background: #666; }
  .pct { width: 57px; padding-left: 12px; box-sizing: border-box; }

  .taskbar { grid-column: 1 / -1; display: flex; justify-content: space-between; overflow: hidden; background: linear-gradient(90deg, #1d1512, #14110b 35%, #0c0a06 75%, #2f261a 85%, #14110b); color: #fff; }
  .taskbar i { width: 44px; margin-left: 253px; background: #4b4642; border-right: 3px solid #34302c; }
  .taskbar span { padding: 4px 20px 0 0; line-height: 14px; }
  .mark { position: absolute; right: 9px; bottom: 8px; display: flex; flex-direction: column; align-items: center; gap: 3px; pointer-events: none; }
  .m-name { color: #333; font: 900 42px/36px "Noto Sans CJK SC", sans-serif; }
  .m-name b { color: #0a6cff; font-weight: 900; }
  .m-url { font: bold 16px/16px "DejaVu Sans", sans-serif; color: #666; }
</style>
